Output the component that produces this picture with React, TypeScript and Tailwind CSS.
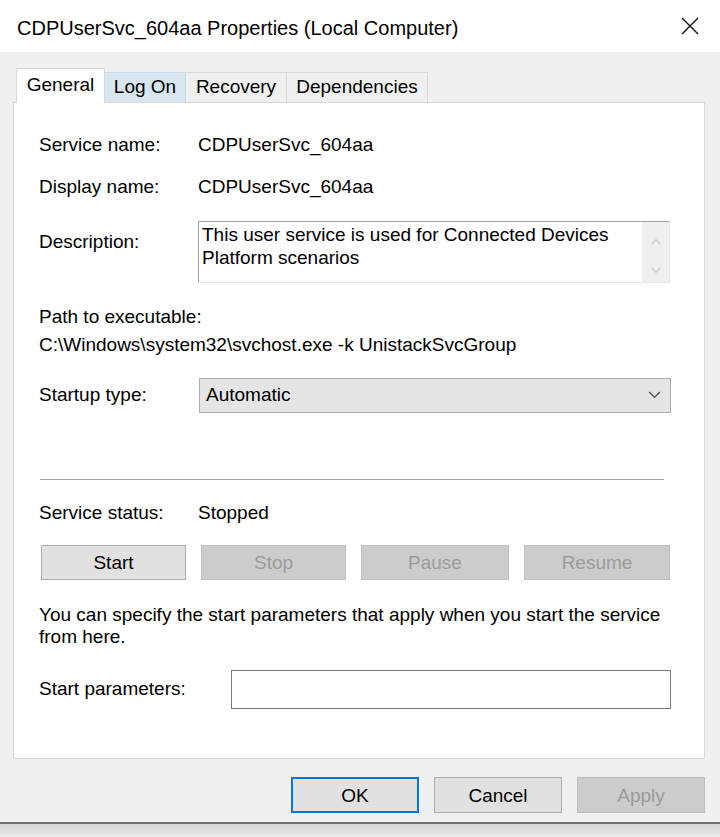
import React from "react";

const font = "font-['Liberation_Sans',Arial,sans-serif]";

const Tab: React.FC<{ label: string; w: string; kind: "active" | "hover" | "idle" }> = ({ label, w, kind }) => {
  if (kind === "active")
    return (
      <div className={`${w} h-[35px] -mb-px relative z-10 bg-white border border-b-0 border-[#d9d9d9] flex items-center justify-center pb-[2px]`}>
        {label}
      </div>
    );
  const tone = kind === "hover" ? "bg-[#d8e6f2] border-[#c5dbee]" : "bg-[#f0f0f0] border-[#d9d9d9]";
  return (
    <div className={`${w} h-[30px] border border-b-0 border-l-0 ${tone} flex items-center justify-center`}>
      {label}
    </div>
  );
};

const SysButton: React.FC<{ label: string; w: string; disabled?: boolean; focused?: boolean }> = ({
  label,
  w,
  disabled,
  focused,
}) => {
  let look = "bg-[#e1e1e1] border border-[#adadad] text-black";
  if (disabled) look = "bg-[#cccccc] border border-[#bfbfbf] text-[#9b9b9b]";
  if (focused) look = "bg-[#e1e1e1] border-2 border-[#0078d7] text-black";
  return <div className={`${w} h-[35px] ${look} flex items-center justify-center pt-[2px]`}>{label}</div>;
};

const Chevron: React.FC<{ up?: boolean; color: string; size?: number }> = ({ up, color, size = 12 }) => (
  <svg width={size} height={size / 2 + 2} viewBox="0 0 12 8" fill="none">
    <path d={up ? "M1 7 L6 2 L11 7" : "M1 1 L6 6 L11 1"} stroke={color} strokeWidth="1.3" />
  </svg>
);

export default function App() {
  return (
    <div className={`w-[720px] h-[837px] bg-white flex flex-col text-[19px] text-black ${font}`}>
      {/* title bar */}
      <div className="h-[52px] shrink-0 flex items-center justify-between pl-[17px] pr-[21px]">
        <span className="text-[20px] pt-[3px]">CDPUserSvc_604aa Properties (Local Computer)</span>
        <svg width="18" height="18" viewBox="0 0 18 18">
          <path d="M1 1 L17 17 M17 1 L1 17" stroke="#111" strokeWidth="1.4" />
        </svg>
      </div>

      {/* dialog body */}
      <div className="h-[770px] shrink-0 bg-[#f0f0f0] pt-[16px] pl-[13px] pr-[15px] flex flex-col">
        <div className="flex items-end pl-[3px]">
          <Tab label="General" w="w-[89px]" kind="active" />
          <Tab label="Log On" w="w-[81px]" kind="hover" />
          <Tab label="Recovery" w="w-[101px]" kind="idle" />
          <Tab label="Dependencies" w="w-[141px]" kind="idle" />
        </div>

        <div className="h-[657px] bg-white border border-[#d9d9d9] pl-[25px] pr-[33px] pt-[21px] flex flex-col">
          <div className="h-[42px] flex items-center">
            <span className="w-[159px]">Service name:</span>
            <span>CDPUserSvc_604aa</span>
          </div>
          <div className="h-[42px] flex items-center">
            <span className="w-[159px]">Display name:</span>
            <span>CDPUserSvc_604aa</span>
          </div>

          <div className="mt-[13px] flex">
            <span className="w-[159px] pt-[8px] leading-[26px]">Description:</span>
            <div className="w-[472px] h-[62px] border-t border-l border-[#a0a0a0] border-r border-b border-r-[#e6e6e6] border-b-[#e6e6e6] flex">
              <div className="flex-1 pl-[3px] pt-[1px] leading-[23px]">
                This user service is used for Connected Devices
                <br />
                Platform scenarios
              </div>
              <div className="w-[27px] bg-[#f0f0f0] flex flex-col items-center justify-between pt-[16px] pb-[8px]">
                <Chevron up color="#c2c2c2" size={10} />
                <Chevron color="#c2c2c2" size={10} />
              </div>
            </div>
          </div>

          <div className="mt-[20px] leading-[28px]">Path to executable:</div>
          <div className="leading-[28px]">C:\Windows\system32\svchost.exe -k UnistackSvcGroup</div>

          <div className="mt-[19px] flex items-center">
            <span className="w-[160px]">Startup type:</span>
            <div className="w-[472px] h-[35px] bg-[#e5e5e5] border border-[#adadad] flex items-center justify-between pl-[6px] pr-[9px]">
              <span>Automatic</span>
              <Chevron color="#505050" size={13} />
            </div>
          </div>

          <div className="mt-[66px] ml-[1px] w-[624px] h-px bg-[#a0a0a0]" />

          <div className="mt-[20px] h-[26px] flex items-center">
            <span className="w-[159px]">Service status:</span>
            <span>Stopped</span>
          </div>

          <div className="mt-[19px] ml-[2px] w-[629px] flex justify-between">
            <SysButton label="Start" w="w-[145px]" />
            <SysButton label="Stop" w="w-[145px]" disabled />
            <SysButton label="Pause" w="w-[148px]" disabled />
            <SysButton label="Resume" w="w-[146px]" disabled />
          </div>

          <div className="mt-[24px] leading-[22px]">
            You can specify the start parameters that apply when you start the service
            <br />
            from here.
          </div>

          <div className="mt-[22px] flex items-center">
            <span className="w-[192px]">Start parameters:</span>
            <div className="w-[440px] h-[39px] bg-white border border-[#7a7a7a]" />
          </div>
        </div>

        <div className="mt-[18px] flex justify-end gap-[15px]">
          <SysButton label="OK" w="w-[128px] h-[36px]" focused />
          <SysButton label="Cancel" w="w-[128px] h-[36px]" />
          <SysButton label="Apply" w="w-[128px] h-[36px]" disabled />
        </div>
      </div>

      <div className="h-[2px] shrink-0 bg-[#6f6f6f]" />
      <div className="flex-1 bg-gradient-to-b from-[#d4d4d4] to-[#ececec]" />
    </div>
  );
}
